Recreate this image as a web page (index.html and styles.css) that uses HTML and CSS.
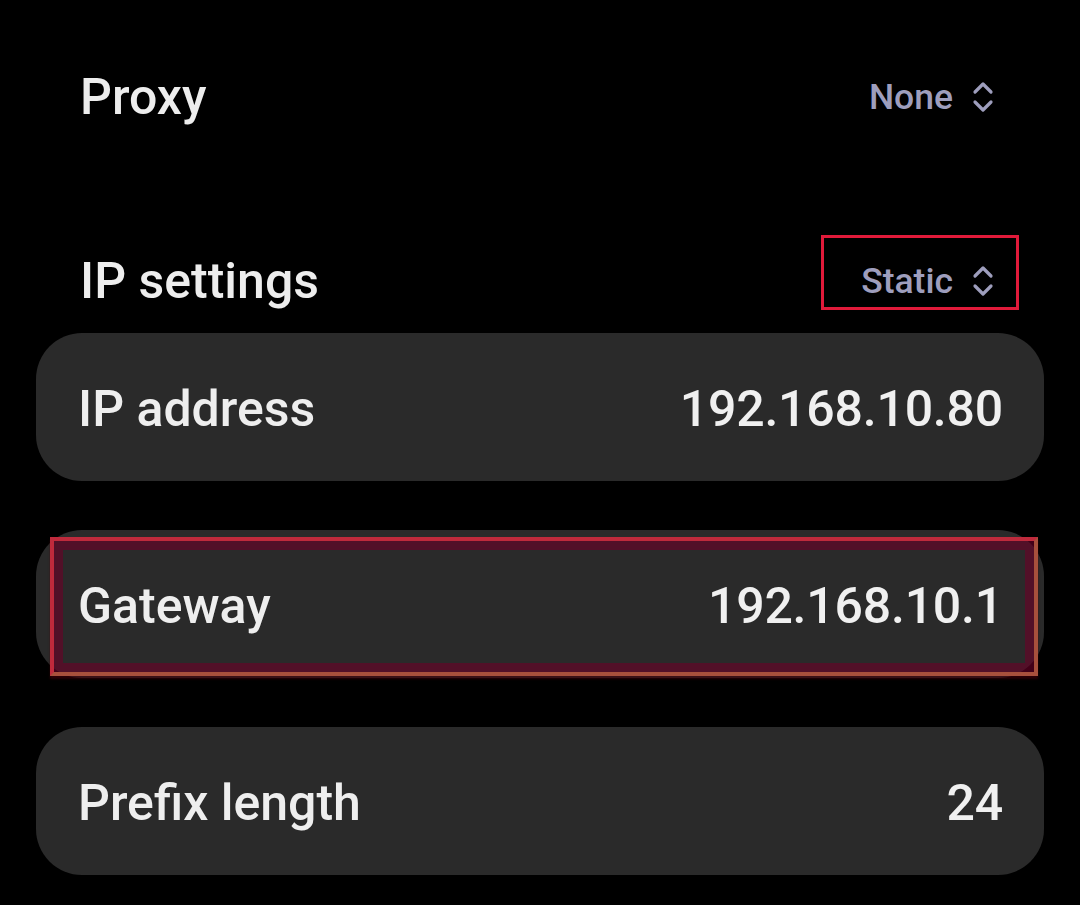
FILE: index.html
```html
<!DOCTYPE html>
<html>
<head>
<meta charset="utf-8">
<link rel="stylesheet" href="styles.css">
</head>
<body>
<div class="page">
  <div class="head-row first">
    <span class="head-label">Proxy</span>
    <span class="head-value">None
      <svg class="chev" viewBox="0 0 22 32" width="22" height="32"><path d="M3 11 L11 3 L19 11 M3 21 L11 29 L19 21" fill="none" stroke="currentColor" stroke-width="3.2" stroke-linecap="round" stroke-linejoin="round"/></svg>
    </span>
  </div>
  <div class="head-row second">
    <span class="head-label">IP settings</span>
    <span class="head-value marked">Static
      <svg class="chev" viewBox="0 0 22 32" width="22" height="32"><path d="M3 11 L11 3 L19 11 M3 21 L11 29 L19 21" fill="none" stroke="currentColor" stroke-width="3.2" stroke-linecap="round" stroke-linejoin="round"/></svg>
      <span class="mark-box"></span>
    </span>
  </div>
  <div class="cards">
    <div class="card">
      <span class="card-label">IP address</span>
      <span class="card-value">192.168.10.80</span>
    </div>
    <div class="card highlighted">
      <span class="card-label">Gateway</span>
      <span class="card-value">192.168.10.1</span>
      <span class="hl-box"></span>
    </div>
    <div class="card">
      <span class="card-label">Prefix length</span>
      <span class="card-value">24</span>
    </div>
  </div>
</div>
</body>
</html>
```

FILE: styles.css
```css
html, body {
  margin: 0;
  padding: 0;
  background: #000;
}
body {
  width: 1080px;
  height: 905px;
  overflow: hidden;
  font-family: Roboto, "Noto Sans", "Liberation Sans", sans-serif;
}
.page {
  padding: 0 36px;
}
.head-row {
  display: flex;
  justify-content: space-between;
  align-items: center;
  padding: 0 50px 0 44px;
}
.head-row.first {
  height: 194px;
}
.head-row.second {
  height: 139px;
  align-items: flex-end;
  padding-bottom: 27px;
  box-sizing: border-box;
}
.head-row.second .head-label,
.head-row.second .head-value {
  height: 50px;
}
.head-label {
  color: #ededed;
  font-size: 50px;
  font-weight: 500;
  line-height: 50px;
  display: flex;
  align-items: center;
}
.head-value {
  color: #9e9ebd;
  font-size: 35.5px;
  font-weight: 500;
  line-height: 50px;
  display: flex;
  align-items: center;
  gap: 19px;
  position: relative;
}
.chev {
  display: block;
  color: #9e9ebd;
}
.mark-box {
  position: absolute;
  left: -40px;
  right: -25px;
  top: -21px;
  bottom: -4px;
  border: 3px solid #e01a3a;
}
.cards {
  display: flex;
  flex-direction: column;
  gap: 49px;
}
.card {
  position: relative;
  height: 148px;
  box-sizing: border-box;
  background: #2a2a2a;
  border-radius: 46px;
  display: flex;
  justify-content: space-between;
  align-items: center;
  padding: 4px 42px 0;
}
.card-label {
  color: #eeeeee;
  font-size: 50px;
  font-weight: 500;
}
.card-value {
  color: #f0f0f0;
  font-size: 50px;
  font-weight: 500;
  letter-spacing: -0.2px;
  margin-right: -1px;
}
.hl-box {
  position: absolute;
  left: 14px;
  right: 6px;
  top: 7px;
  bottom: 2px;
  border: 4px solid #bf2a3c;
  border-right-color: #a8503c;
  border-bottom-color: #a8503c;
  box-shadow: inset 0 0 0 9px rgba(110, 0, 40, 0.6), 0 3px 2px rgba(70, 0, 10, 0.6);
}
```
